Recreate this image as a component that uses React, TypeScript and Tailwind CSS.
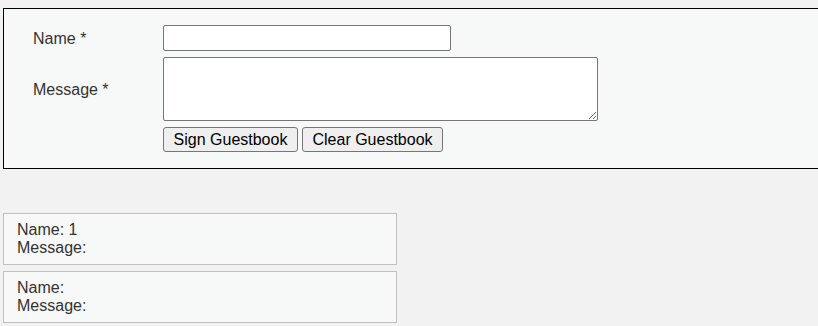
import { useState } from 'react';

interface Entry {
  name: string;
  message: string;
}

export default function App() {
  const [name, setName] = useState('');
  const [message, setMessage] = useState('');
  const [entries, setEntries] = useState<Entry[]>([
    { name: '1', message: '' },
    { name: '', message: '' },
  ]);

  const sign = () => {
    if (!name || !message) return;
    setEntries(e => [{ name, message }, ...e]);
    setName('');
    setMessage('');
  };

  return (
    <div className="min-h-screen overflow-hidden bg-[#f2f2f2] pt-2 pl-[3px] font-['Liberation_Sans',Arial,sans-serif] text-[16px] text-[#333]">
      <div className="w-[830px] border border-black bg-[#f7f8f8] pt-4 pb-4 pl-[29px]">
        <div className="grid grid-cols-[130px_auto] items-center gap-y-[6px]">
          <label htmlFor="name" className="pt-px">Name *</label>
          <input id="name" value={name} onChange={e => setName(e.target.value)}
            className="h-[26px] w-[288px] rounded-[2px] border border-[#767676] bg-white px-1 outline-none" />

          <label htmlFor="message" className="pt-px">Message *</label>
          <textarea id="message" value={message} onChange={e => setMessage(e.target.value)}
            className="block h-[64px] w-[435px] rounded-[2px] border border-[#767676] bg-white px-1 outline-none" />

          <div />
          <div className="flex gap-[4px] text-black">
            <button onClick={sign}
              className="h-[25px] w-[135px] rounded-[3px] border border-[#767676] bg-[#efefef] leading-none hover:bg-[#e5e5e5]">
              Sign Guestbook
            </button>
            <button onClick={() => setEntries([])}
              className="h-[25px] w-[141px] rounded-[3px] border border-[#767676] bg-[#efefef] leading-none hover:bg-[#e5e5e5]">
              Clear Guestbook
            </button>
          </div>
        </div>
      </div>

      <div className="mt-[44px] flex flex-col gap-[6px]">
        {entries.map((entry, i) => (
          <div key={i} className="w-[394px] border border-[#c0c0c0] bg-[#f7f8f8] py-[7px] pl-[13px] leading-[18px]">
            <div>Name: {entry.name}</div>
            <div>Message: {entry.message}</div>
          </div>
        ))}
      </div>
    </div>
  );
}
